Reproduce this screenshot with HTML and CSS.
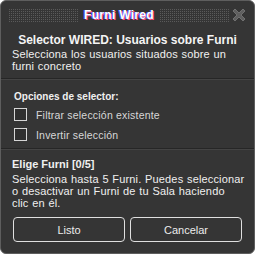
FILE: index.html
```html
<!DOCTYPE html>
<html>
<head>
    <title>Furni Wired</title>
    <link rel="stylesheet" href="styles.css">
</head>
<body>
    <div class="window">
        <header class="title-bar">
            <div class="dots"></div>
            <h1 class="title">Furni Wired</h1>
            <div class="dots"></div>
            <svg class="close" width="16" height="16" viewBox="0 0 16 16">
                <path d="M2 4 L4 2 L8 6 L12 2 L14 4 L10 8 L14 12 L12 14 L8 10 L4 14 L2 12 L6 8 Z" fill="#5f5f5f" stroke="#7a7a7a" stroke-width="0.8"/>
            </svg>
        </header>

        <section class="block intro">
            <h2 class="block-title">Selector WIRED: Usuarios sobre Furni</h2>
            <p class="text">Selecciona los usuarios situados sobre un<br>furni concreto</p>
        </section>

        <section class="block options">
            <h3 class="section-title">Opciones de selector:</h3>
            <label class="check"><span class="box"></span>Filtrar selección existente</label>
            <label class="check"><span class="box"></span>Invertir selección</label>
        </section>

        <section class="block last">
            <h3 class="pick-title">Elige Furni [0/5]</h3>
            <p class="text">Selecciona hasta 5 Furni. Puedes seleccionar<br>o desactivar un Furni de tu Sala haciendo<br>clic en él.</p>
            <div class="buttons">
                <button class="btn">Listo</button>
                <button class="btn">Cancelar</button>
            </div>
        </section>
    </div>
</body>
</html>
```

FILE: styles.css
```css
/* Base */
body {
    margin: 0;
    background: #ffffff;
    font-family: 'Liberation Sans', Arial, sans-serif;
    color: #f0f0f0;
}

/* Window */
.window {
    width: 253px;
    height: 252px;
    background: #353535;
    border: 1px solid #5e5e5e;
    border-radius: 6px;
    display: flex;
    flex-direction: column;
    overflow: hidden;
}

/* Title Bar */
.title-bar {
    display: flex;
    align-items: center;
    gap: 5px;
    padding: 6px 7px 0 7px;
    height: 16px;
}

.dots {
    flex: 1;
    height: 15px;
    background-color: #5a5a5a;
    background-image:
        linear-gradient(90deg, #353535 1px, transparent 1px),
        linear-gradient(#353535 1px, transparent 1px);
    background-size: 2px 2px;
}

.title {
    margin: 0;
    font-size: 12px;
    font-weight: bold;
    color: #ffffff;
    letter-spacing: 0.3px;
    text-shadow: -1px 0 #4a5cff, 1px 1px #ff4f86;
}

.close {
    margin-left: -4px;
    flex-shrink: 0;
}

/* Blocks */
.block {
    padding: 0 11px;
    border-bottom: 1px solid #262626;
    box-shadow: 0 1px 0 #444;
}

.intro {
    padding-top: 10px;
    padding-bottom: 6px;
}

.block-title {
    margin: 0 0 1px;
    font-size: 12px;
    font-weight: bold;
    text-align: center;
    color: #f4f4f4;
}

.text {
    margin: 0 -4px 0 0;
    font-size: 11px;
    line-height: 12px;
    letter-spacing: 0.15px;
    word-spacing: 0.5px;
    color: #f0f0f0;
    white-space: nowrap;
}

/* Options */
.options {
    padding-top: 12px;
    padding-bottom: 7px;
    padding-left: 13px;
}

.section-title {
    margin: 0 0 6px;
    font-size: 10px;
    font-weight: bold;
    color: #f0f0f0;
}

.check {
    display: flex;
    align-items: center;
    gap: 9px;
    font-size: 10.5px;
    letter-spacing: 0.2px;
    color: #d8d8d8;
    height: 13px;
    margin-bottom: 7px;
}

.check:last-child {
    margin-bottom: 0;
}

.box {
    width: 11px;
    height: 11px;
    border: 1px solid #d6d6d6;
    background: #2f2f2f;
}

/* Pick section */
.last {
    border: none;
    box-shadow: none;
    padding-top: 9px;
}

.pick-title {
    margin: 0 0 3px;
    font-size: 11px;
    font-weight: bold;
    color: #f0f0f0;
}

.buttons {
    display: flex;
    gap: 5px;
    margin-top: 8px;
    padding: 0 1px;
}

.btn {
    flex: 1;
    height: 25px;
    background: #353535;
    border: 1px solid #e0e0e0;
    border-radius: 4px;
    color: #ececec;
    font-family: 'Liberation Sans', Arial, sans-serif;
    font-size: 11px;
}
```
